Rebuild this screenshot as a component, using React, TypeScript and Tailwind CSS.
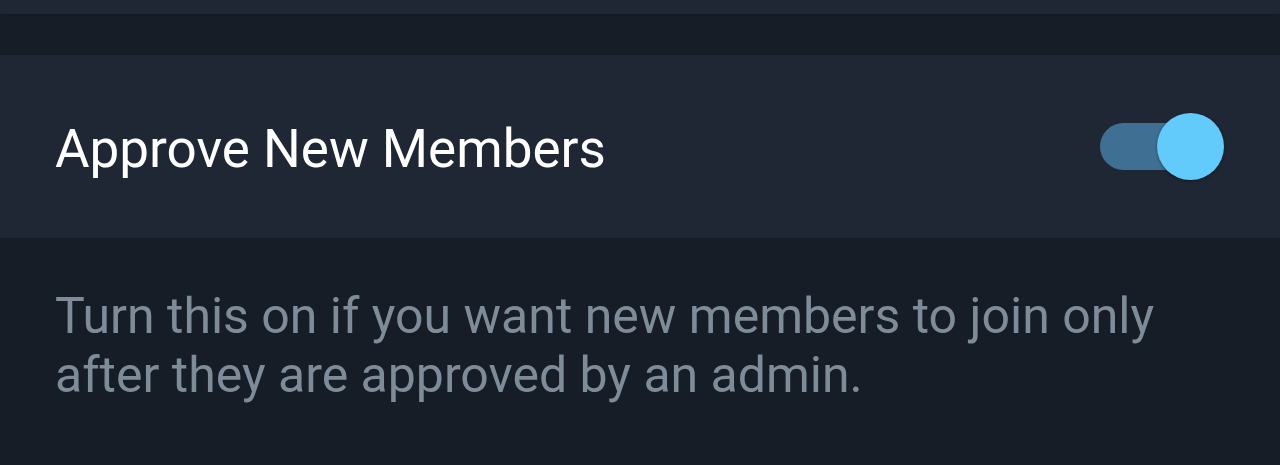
import React from "react";

export default function App() {
  return (
    <div className="w-[1280px] h-[465px] bg-[#171d26] overflow-hidden" style={{ fontFamily: "Roboto, 'Noto Sans', sans-serif" }}>
      <div className="h-[14px] bg-[#1e2733] shadow-[0_1px_2px_rgba(0,0,0,0.2)]" />
      <div className="h-[41px]" />
      <div className="h-[183px] bg-[#1e2733] flex items-center justify-between pl-[55px] pr-[56px]">
        <span className="text-white text-[53px] leading-none mt-[5px]">Approve New Members</span>
        <div className="relative w-[124px] h-[67px] flex items-center">
          <div className="w-[100px] h-[47px] rounded-full bg-[#3f6f92]" />
          <div className="absolute right-0 top-0 w-[67px] h-[67px] rounded-full bg-[#63cafc] shadow-[0_1px_3px_rgba(0,0,0,0.4)]" />
        </div>
      </div>
      <div className="px-[55px] pt-[49px]">
        <p className="text-[#7e8c9a] text-[50px] leading-[59px]">
          Turn this on if you want new members to join only after they are approved by an admin.
        </p>
      </div>
    </div>
  );
}
